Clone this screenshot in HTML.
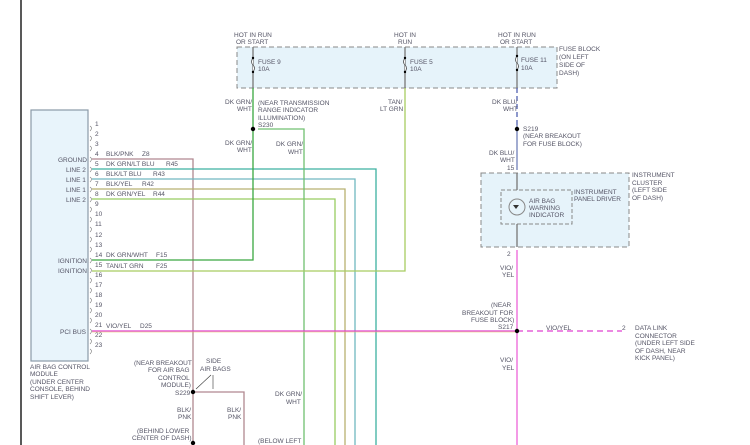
<!DOCTYPE html><html><head><style>body{margin:0;background:#fff}svg{display:block}text{font-family:"Liberation Sans",sans-serif;font-size:6.5px;fill:#556}</style></head><body>
<svg width="750" height="445" viewBox="0 0 750 445" xmlns="http://www.w3.org/2000/svg">
<line x1="21" y1="0" x2="21" y2="445" stroke="#222" stroke-width="1.5"/>
<rect x="31" y="110" width="57" height="251" fill="#e8f4fb" stroke="#8a9aa8" stroke-width="1.2"/>
<rect x="237" y="47" width="320" height="41" fill="#e6f3fa" stroke="#888" stroke-dasharray="5,3"/>
<rect x="481" y="173" width="148" height="74" fill="#e6f3fa" stroke="#888" stroke-dasharray="5,3"/>
<rect x="501" y="190" width="71" height="34" fill="#e6f3fa" stroke="#888" stroke-dasharray="4,2"/>
<g fill="none" stroke-width="1.3">
<polyline points="92,159 193,159 193,445" stroke="#b08890"/>
<polyline points="92,169 376,169 376,445" stroke="#3cb0a0"/>
<polyline points="92,179 355,179 355,445" stroke="#70b8c0"/>
<polyline points="92,189 345,189 345,445" stroke="#b8b070"/>
<polyline points="92,199 335,199 335,445" stroke="#98cc60"/>
<polyline points="92,260 253,260 253,88" stroke="#3aa840"/>
<line x1="253" y1="47" x2="253" y2="88" stroke="#777"/>
<polyline points="258,129 304,129 304,445" stroke="#70c070"/>
<polyline points="92,271 405,271 405,88" stroke="#a8cc60"/>
<line x1="405" y1="47" x2="405" y2="88" stroke="#777"/>
<line x1="517" y1="47" x2="517" y2="88" stroke="#777"/>
<line x1="517" y1="88" x2="517" y2="125" stroke="#5060b0" stroke-dasharray="5,3"/>
<line x1="517" y1="125" x2="517" y2="170" stroke="#7080b8"/>
<line x1="517" y1="173" x2="517" y2="190" stroke="#777"/>
<line x1="517" y1="224" x2="517" y2="247" stroke="#777"/>
<line x1="92" y1="331" x2="517" y2="331" stroke="#e040d0"/>
<line x1="92" y1="332" x2="517" y2="332" stroke="#e8c060" stroke-width="0.6"/>
<line x1="517" y1="250" x2="517" y2="445" stroke="#f080e0" stroke-width="1.6"/>
<line x1="517" y1="331" x2="622" y2="331" stroke="#e040d0" stroke-dasharray="6,4"/>
<polyline points="193,392 244,392 244,445" stroke="#b08890"/>
</g>
<g fill="#fff" stroke="#555" stroke-width="0.8">
<path d="M253,58 q-3,4 0,7 q3,3 0,7"/><path d="M405,58 q-3,4 0,7 q3,3 0,7"/><path d="M517,56 q-3,4 0,7 q3,3 0,7"/>
</g>
<g fill="none" stroke="#777" stroke-width="0.6">
<path d="M90,126 q3,2 0,5 M90,136 q3,2 0,5 M90,146 q3,2 0,5 M90,157 q3,2 0,5 M90,167 q3,2 0,5 M90,177 q3,2 0,5 M90,187 q3,2 0,5 M90,197 q3,2 0,5 M90,207 q3,2 0,5 M90,217 q3,2 0,5 M90,227 q3,2 0,5 M90,237 q3,2 0,5 M90,247 q3,2 0,5 M90,258 q3,2 0,5 M90,268 q3,2 0,5 M90,278 q3,2 0,5 M90,288 q3,2 0,5 M90,298 q3,2 0,5 M90,308 q3,2 0,5 M90,318 q3,2 0,5 M90,329 q3,2 0,5 M90,339 q3,2 0,5 M90,349 q3,2 0,5"/>
</g>
<g fill="#000"><circle cx="253" cy="129" r="2.2"/><circle cx="517" cy="129" r="2.2"/><circle cx="517" cy="331" r="2.2"/><circle cx="193" cy="392" r="2.2"/><circle cx="193" cy="443" r="2.2"/>
<circle cx="253" cy="58" r="1.2"/><circle cx="253" cy="72" r="1.2"/><circle cx="405" cy="58" r="1.2"/><circle cx="405" cy="72" r="1.2"/><circle cx="517" cy="56" r="1.2"/><circle cx="517" cy="70" r="1.2"/></g>
<line x1="211" y1="375" x2="196" y2="389" stroke="#333" stroke-width="0.6"/><line x1="213" y1="375" x2="213" y2="389" stroke="#333" stroke-width="0.6"/>
<circle cx="517" cy="207" r="8" fill="none" stroke="#888"/>
<path d="M513,205 h6 l-3,4 z" fill="#333"/>
<g font-size="6">
<text x="234" y="37">HOT IN RUN</text><text x="236" y="44">OR START</text>
<text x="394" y="37">HOT IN</text><text x="398" y="44">RUN</text>
<text x="498" y="37">HOT IN RUN</text><text x="500" y="44">OR START</text>
<text x="258" y="64">FUSE 9</text><text x="258" y="71">10A</text>
<text x="410" y="64">FUSE 5</text><text x="410" y="71">10A</text>
<text x="521" y="62">FUSE 11</text><text x="521" y="70">10A</text>
<text x="559" y="51">FUSE BLOCK</text><text x="559" y="59">(ON LEFT</text><text x="559" y="67">SIDE OF</text><text x="559" y="75">DASH)</text>
<text x="225" y="104">DK GRN/</text><text x="237" y="111">WHT</text>
<text x="258" y="105">(NEAR TRANSMISSION</text><text x="258" y="112">RANGE INDICATOR</text><text x="258" y="120">ILLUMINATION)</text><text x="258" y="127">S230</text>
<text x="225" y="145">DK GRN/</text><text x="237" y="152">WHT</text>
<text x="276" y="146">DK GRN/</text><text x="288" y="154">WHT</text>
<text x="388" y="104">TAN/</text><text x="380" y="111">LT GRN</text>
<text x="492" y="104">DK BLU/</text><text x="503" y="111">WHT</text>
<text x="523" y="131">S219</text><text x="523" y="138">(NEAR BREAKOUT</text><text x="523" y="146">FOR FUSE BLOCK)</text>
<text x="489" y="155">DK BLU/</text><text x="500" y="162">WHT</text><text x="507" y="170">15</text>
<text x="632" y="177">INSTRUMENT</text><text x="632" y="185">CLUSTER</text><text x="632" y="192">(LEFT SIDE</text><text x="632" y="200">OF DASH)</text>
<text x="574" y="194">INSTRUMENT</text><text x="574" y="201">PANEL DRIVER</text>
<text x="529" y="203">AIR BAG</text><text x="529" y="210">WARNING</text><text x="529" y="217">INDICATOR</text>
<text x="507" y="256">2</text>
<text x="500" y="270">VIO/</text><text x="502" y="277">YEL</text>
<text x="491" y="307">(NEAR</text><text x="462" y="315">BREAKOUT FOR</text><text x="471" y="322">FUSE BLOCK)</text><text x="498" y="329">S217</text>
<text x="546" y="330">VIO/YEL</text><text x="622" y="330">2</text>
<text x="635" y="330">DATA LINK</text><text x="635" y="338">CONNECTOR</text><text x="635" y="345">(UNDER LEFT SIDE</text><text x="635" y="353">OF DASH, NEAR</text><text x="635" y="360">KICK PANEL)</text>
<text x="500" y="362">VIO/</text><text x="502" y="370">YEL</text>
<text x="58" y="162">GROUND</text><text x="66" y="172">LINE 2</text><text x="66" y="182">LINE 1</text><text x="66" y="192">LINE 1</text><text x="66" y="202">LINE 2</text>
<text x="58" y="263">IGNITION</text><text x="58" y="273">IGNITION</text><text x="60" y="334">PCI BUS</text>
<text x="30" y="369">AIR BAG CONTROL</text><text x="30" y="376">MODULE</text><text x="30" y="384">(UNDER CENTER</text><text x="30" y="391">CONSOLE, BEHIND</text><text x="30" y="399">SHIFT LEVER)</text>
<text x="106" y="156">BLK/PNK</text><text x="142" y="156">Z8</text>
<text x="106" y="166">DK GRN/LT BLU</text><text x="166" y="166">R45</text>
<text x="106" y="176">BLK/LT BLU</text><text x="153" y="176">R43</text>
<text x="106" y="186">BLK/YEL</text><text x="142" y="186">R42</text>
<text x="106" y="196">DK GRN/YEL</text><text x="153" y="196">R44</text>
<text x="106" y="257">DK GRN/WHT</text><text x="156" y="257">F15</text>
<text x="106" y="268">TAN/LT GRN</text><text x="156" y="268">F25</text>
<text x="106" y="328">VIO/YEL</text><text x="140" y="328">D25</text>
<text x="134" y="365">(NEAR BREAKOUT</text><text x="148" y="372">FOR AIR BAG</text><text x="158" y="380">CONTROL</text><text x="161" y="387">MODULE)</text><text x="175" y="395">S229</text>
<text x="206" y="363">SIDE</text><text x="200" y="371">AIR BAGS</text>
<text x="177" y="412">BLK/</text><text x="178" y="419">PNK</text>
<text x="227" y="412">BLK/</text><text x="228" y="419">PNK</text>
<text x="137" y="433">(BEHIND LOWER</text><text x="132" y="440">CENTER OF DASH)</text>
<text x="275" y="396">DK GRN/</text><text x="286" y="404">WHT</text>
<text x="258" y="443">(BELOW LEFT</text>
</g>
<g font-size="6">
<text x="95" y="126">1</text><text x="95" y="136">2</text><text x="95" y="146">3</text><text x="95" y="156">4</text><text x="95" y="166">5</text><text x="95" y="176">6</text><text x="95" y="186">7</text><text x="95" y="196">8</text><text x="95" y="206">9</text><text x="95" y="216">10</text><text x="95" y="226">11</text><text x="95" y="237">12</text><text x="95" y="247">13</text><text x="95" y="257">14</text><text x="95" y="267">15</text><text x="95" y="277">16</text><text x="95" y="287">17</text><text x="95" y="297">18</text><text x="95" y="307">19</text><text x="95" y="317">20</text><text x="95" y="327">21</text><text x="95" y="337">22</text><text x="95" y="347">23</text>
</g>
</svg></body></html>
